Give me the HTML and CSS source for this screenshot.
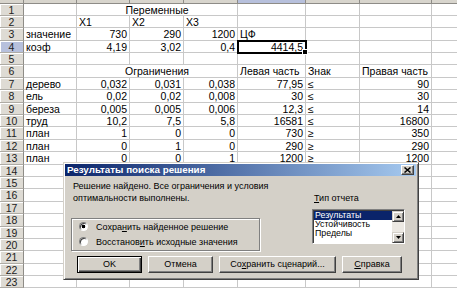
FILE: index.html
```html
<!DOCTYPE html>
<html lang="ru">

<head>
  <meta charset="UTF-8">
  <meta name="viewport" content="width=device-width, initial-scale=1.0">
  <title>Поиск решения</title>
  <link rel="stylesheet" href="styles.css">
</head>

<body>
  <div class="sheet">
    <!-- заголовки столбцов (видна только нижняя кромка) -->
    <div class="ch"></div><div class="ch"></div><div class="ch"></div><div class="ch"></div><div class="ch"></div><div class="ch sel"></div><div class="ch"></div><div class="ch"></div><div class="ch"></div>

    <div class="rh">1</div><div></div><div class="m">Переменные</div><div></div><div></div><div></div><div></div>
    <div class="rh">2</div><div></div><div>X1</div><div>X2</div><div>X3</div><div></div><div></div><div></div><div></div>
    <div class="rh">3</div><div>значение</div><div class="n">730</div><div class="n">290</div><div class="n">1200</div><div>ЦФ</div><div></div><div></div><div></div>
    <div class="rh sel">4</div><div>коэф</div><div class="n">4,19</div><div class="n">3,02</div><div class="n">0,4</div><div class="n cur">4414,5</div><div></div><div></div><div></div>
    <div class="rh">5</div><div></div><div></div><div></div><div></div><div></div><div></div><div></div><div></div>
    <div class="rh">6</div><div></div><div class="m">Ограничения</div><div>Левая часть</div><div>Знак</div><div>Правая часть</div><div></div>
    <div class="rh">7</div><div>дерево</div><div class="n">0,032</div><div class="n">0,031</div><div class="n">0,038</div><div class="n">77,95</div><div>≤</div><div class="n">90</div><div></div>
    <div class="rh">8</div><div>ель</div><div class="n">0,02</div><div class="n">0,02</div><div class="n">0,008</div><div class="n">30</div><div>≤</div><div class="n">30</div><div></div>
    <div class="rh">9</div><div>береза</div><div class="n">0,005</div><div class="n">0,005</div><div class="n">0,006</div><div class="n">12,3</div><div>≤</div><div class="n">14</div><div></div>
    <div class="rh">10</div><div>труд</div><div class="n">10,2</div><div class="n">7,5</div><div class="n">5,8</div><div class="n">16581</div><div>≤</div><div class="n">16800</div><div></div>
    <div class="rh">11</div><div>план</div><div class="n">1</div><div class="n">0</div><div class="n">0</div><div class="n">730</div><div>≥</div><div class="n">350</div><div></div>
    <div class="rh">12</div><div>план</div><div class="n">0</div><div class="n">1</div><div class="n">0</div><div class="n">290</div><div>≥</div><div class="n">290</div><div></div>
    <div class="rh">13</div><div>план</div><div class="n">0</div><div class="n">0</div><div class="n">1</div><div class="n">1200</div><div>≥</div><div class="n">1200</div><div></div>
    <div class="rh">14</div><div></div><div></div><div></div><div></div><div></div><div></div><div></div><div></div>
    <div class="rh">15</div><div></div><div></div><div></div><div></div><div></div><div></div><div></div><div></div>
    <div class="rh">16</div><div></div><div></div><div></div><div></div><div></div><div></div><div></div><div></div>
    <div class="rh">17</div><div></div><div></div><div></div><div></div><div></div><div></div><div></div><div></div>
    <div class="rh">18</div><div></div><div></div><div></div><div></div><div></div><div></div><div></div><div></div>
    <div class="rh">19</div><div></div><div></div><div></div><div></div><div></div><div></div><div></div><div></div>
    <div class="rh">20</div><div></div><div></div><div></div><div></div><div></div><div></div><div></div><div></div>
    <div class="rh">21</div><div></div><div></div><div></div><div></div><div></div><div></div><div></div><div></div>
    <div class="rh">22</div><div></div><div></div><div></div><div></div><div></div><div></div><div></div><div></div>
    <div class="rh">23</div><div></div><div></div><div></div><div></div><div></div><div></div><div></div><div></div>
  </div>

  <!-- окно "Результаты поиска решения" -->
  <div class="dialog">
    <div class="title">
      <span>Результаты поиска решения</span>
      <span class="close">
        <svg width="7" height="6" viewBox="0 0 7 6"><path d="M0.5 0.5 L6.5 5.5 M6.5 0.5 L0.5 5.5" stroke="#000" stroke-width="1.5"/></svg>
      </span>
    </div>

    <div class="content">
      <div class="left">
        <p class="msg">Решение найдено. Все ограничения и условия<br>оптимальности выполнены.</p>
        <div class="group">
          <label class="opt"><span class="radio on"></span><span>Сохра<u>н</u>ить найденное решение</span></label>
          <label class="opt"><span class="radio"></span><span>Восстанов<u>и</u>ть исходные значения</span></label>
        </div>
      </div>
      <div class="right">
        <p class="lbl"><u>Т</u>ип отчета</p>
        <div class="list">
          <ul>
            <li class="active">Результаты</li>
            <li>Устойчивость</li>
            <li>Пределы</li>
          </ul>
          <div class="scroll">
            <span class="arrow"><svg width="5" height="3" viewBox="0 0 5 3"><polygon points="2.5,0 5,3 0,3" fill="#000"/></svg></span>
            <span class="track"></span>
            <span class="arrow"><svg width="5" height="3" viewBox="0 0 5 3"><polygon points="0,0 5,0 2.5,3" fill="#000"/></svg></span>
          </div>
        </div>
      </div>
    </div>

    <div class="buttons">
      <span class="btn default">OK</span>
      <span class="btn">Отмена</span>
      <span class="btn wide">Со<u>х</u>ранить сценарий...</span>
      <span class="btn narrow"><u>С</u>правка</span>
    </div>
  </div>
</body>

</html>
```

FILE: styles.css
```css
* {
  margin: 0;
  padding: 0;
  box-sizing: border-box;
}

body {
  width: 457px;
  height: 288px;
  overflow: hidden;
  position: relative;
  background: #fff;
  font-family: "Liberation Sans", Arial, sans-serif;
}

/* лист Excel */
.sheet {
  display: grid;
  grid-template-columns: 24px 53px 53px 54px 54px 68px 54px 72px 40px;
  grid-template-rows: 3.5px;
  grid-auto-rows: 12.4px;
  font-size: 10.5px;
  line-height: 12.6px;
  color: #000;
}

.sheet > div {
  border-right: 1px solid #c8c8c8;
  border-bottom: 1px solid #c8c8c8;
  padding: 0 2px;
  white-space: nowrap;
}

.sheet .n {
  text-align: right;
}

.sheet .m {
  grid-column: span 3;
  text-align: center;
}

.sheet .ch {
  background: #d8d5cd;
  border-right-color: #8e8c87;
  border-bottom-color: #8e8c87;
}

.sheet .rh {
  background: #dedbd4;
  border-right-color: #8e8c87;
  border-bottom-color: #aeaba4;
  box-shadow: inset 1px 1px #fff;
  text-align: center;
  font-size: 10.5px;
  color: #222;
}

.sheet .sel {
  background: #b7c0dc;
}

.sheet .cur {
  position: relative;
  outline: 2px solid #000;
  outline-offset: -1px;
  z-index: 1;
}

.sheet .cur::after {
  content: "";
  position: absolute;
  right: -3px;
  bottom: -3px;
  width: 4px;
  height: 4px;
  background: #000;
  border: 1px solid #fff;
}

/* диалог */
.dialog {
  position: absolute;
  left: 63px;
  top: 162px;
  width: 356px;
  height: 118px;
  background: #d4d0c8;
  border: 1px solid;
  border-color: #d4d0c8 #404040 #404040 #d4d0c8;
  box-shadow: inset 1px 1px #fff, inset -1px -1px #808080;
  padding: 1px 2px 1px 1px;
  font-size: 9px;
  line-height: 12px;
  color: #000;
}

.title {
  height: 12px;
  background: linear-gradient(to right, #0a246a, #a6caf0);
  color: #fff;
  font-weight: bold;
  font-size: 9.8px;
  line-height: 12px;
  padding-left: 2px;
  display: flex;
  justify-content: space-between;
  align-items: center;
}

.close {
  width: 13px;
  height: 10px;
  margin-right: 2px;
  background: #d4d0c8;
  border: 1px solid;
  border-color: #fff #404040 #404040 #fff;
  box-shadow: inset -1px -1px #808080;
  display: flex;
  align-items: center;
  justify-content: center;
}

.content {
  display: flex;
  gap: 52px;
  padding: 4px 0 0 6px;
}

.left {
  width: 189px;
}

.msg {
  padding-left: 2px;
  white-space: nowrap;
}

.group {
  margin-top: 14px;
  height: 33px;
  border: 1px solid #808080;
  box-shadow: inset 1px 1px #fff, 1px 1px #fff;
  display: flex;
  flex-direction: column;
  padding-left: 7px;
}

.opt {
  height: 15px;
  display: flex;
  align-items: center;
  gap: 8px;
  white-space: nowrap;
}

.radio {
  width: 9px;
  height: 9px;
  border-radius: 50%;
  border: 1px solid;
  border-color: #808080 #fff #fff #808080;
  box-shadow: inset 1px 1px #404040;
  background: #fff;
}

.radio.on {
  background: radial-gradient(circle, #000 1.5px, #fff 2.1px);
}

.right {
  width: 93px;
}

.lbl {
  margin-top: 12px;
  padding-left: 2px;
}

.list {
  margin-top: 5px;
  height: 35px;
  background: #fff;
  border: 1px solid;
  border-color: #808080 #fff #fff #808080;
  box-shadow: inset 1px 1px #404040;
  display: flex;
  padding: 1px 0 0 1px;
}

.list ul {
  list-style: none;
  flex: 1;
  font-size: 8.8px;
  line-height: 9px;
}

.list li {
  height: 9px;
  padding-left: 1px;
  white-space: nowrap;
}

.list .active {
  background: #0a246a;
  color: #fff;
}

.scroll {
  width: 12px;
  display: flex;
  flex-direction: column;
}

.arrow {
  height: 11px;
  background: #d4d0c8;
  border: 1px solid;
  border-color: #d4d0c8 #404040 #404040 #d4d0c8;
  box-shadow: inset 1px 1px #fff, inset -1px -1px #808080;
  display: flex;
  align-items: center;
  justify-content: center;
}

.track {
  flex: 1;
  background: #ece9e3;
}

.buttons {
  display: flex;
  gap: 6px;
  padding-left: 12px;
  margin-top: 5px;
}

.btn {
  width: 65px;
  height: 17px;
  border: 1px solid;
  border-color: #fff #404040 #404040 #fff;
  box-shadow: inset -1px -1px #808080;
  text-align: center;
  line-height: 15px;
  white-space: nowrap;
}

.btn.default {
  border-color: #000;
  box-shadow: inset 1px 1px #fff, inset -1px -1px #404040, inset -2px -2px #808080;
}

.btn.wide {
  width: 117px;
}

.btn.narrow {
  width: 60px;
}
```
